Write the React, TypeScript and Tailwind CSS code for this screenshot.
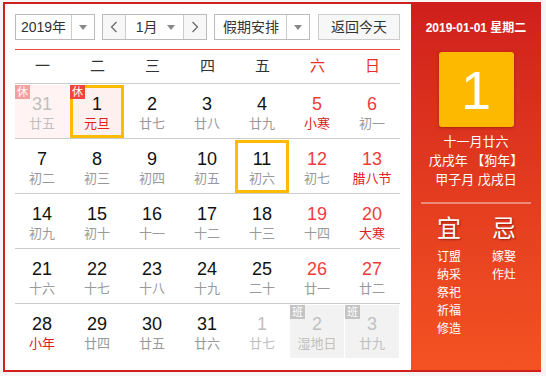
import type { ReactNode } from 'react';

type Day = {
  d: number;
  lunar: string;
  other?: boolean;
  weekend?: boolean;
  fest?: boolean;
  badge?: '休' | '班';
  selected?: boolean;
  today?: boolean;
};

const WEEK = ['一', '二', '三', '四', '五', '六', '日'];

const ROWS: Day[][] = [
  [
    { d: 31, lunar: '廿五', other: true, badge: '休' },
    { d: 1, lunar: '元旦', fest: true, badge: '休', selected: true },
    { d: 2, lunar: '廿七' },
    { d: 3, lunar: '廿八' },
    { d: 4, lunar: '廿九' },
    { d: 5, lunar: '小寒', weekend: true, fest: true },
    { d: 6, lunar: '初一', weekend: true },
  ],
  [
    { d: 7, lunar: '初二' },
    { d: 8, lunar: '初三' },
    { d: 9, lunar: '初四' },
    { d: 10, lunar: '初五' },
    { d: 11, lunar: '初六', today: true },
    { d: 12, lunar: '初七', weekend: true },
    { d: 13, lunar: '腊八节', weekend: true, fest: true },
  ],
  [
    { d: 14, lunar: '初九' },
    { d: 15, lunar: '初十' },
    { d: 16, lunar: '十一' },
    { d: 17, lunar: '十二' },
    { d: 18, lunar: '十三' },
    { d: 19, lunar: '十四', weekend: true },
    { d: 20, lunar: '大寒', weekend: true, fest: true },
  ],
  [
    { d: 21, lunar: '十六' },
    { d: 22, lunar: '十七' },
    { d: 23, lunar: '十八' },
    { d: 24, lunar: '十九' },
    { d: 25, lunar: '二十' },
    { d: 26, lunar: '廿一', weekend: true },
    { d: 27, lunar: '廿二', weekend: true },
  ],
  [
    { d: 28, lunar: '小年', fest: true },
    { d: 29, lunar: '廿四' },
    { d: 30, lunar: '廿五' },
    { d: 31, lunar: '廿六' },
    { d: 1, lunar: '廿七', other: true },
    { d: 2, lunar: '湿地日', other: true, badge: '班' },
    { d: 3, lunar: '廿九', other: true, badge: '班' },
  ],
];

const YI = ['订盟', '纳采', '祭祀', '祈福', '修造'];
const JI = ['嫁娶', '作灶'];

const FONT = { fontFamily: '"Liberation Sans", "Noto Sans CJK SC", sans-serif' };

function Caret() {
  return <span className="h-0 w-0 border-x-[4px] border-t-[5px] border-x-transparent border-t-[#888]" />;
}

function Chevron({ right }: { right?: boolean }) {
  return (
    <svg width="8" height="12" viewBox="0 0 8 12">
      <polyline
        points={right ? '1.5,1 6.5,6 1.5,11' : '6.5,1 1.5,6 6.5,11'}
        fill="none"
        stroke="#666"
        strokeWidth="1.2"
      />
    </svg>
  );
}

function Select({ width, label, textW, children }: { width: string; label: string; textW: string; children?: ReactNode }) {
  return (
    <div className={`flex h-[26px] border border-[#bbb] bg-white ${width}`}>
      <span className={`flex items-center justify-center ${textW}`}>{label}</span>
      <span className="flex flex-1 items-center justify-center border-l border-[#ccc]">
        <Caret />
      </span>
      {children}
    </div>
  );
}

function Cell({ day }: { day: Day }) {
  let bg = '';
  if (day.badge === '休') bg = day.other ? 'bg-[#fff3f3]' : 'bg-[#fff0f0]';
  if (day.badge === '班') bg = 'bg-[#f2f2f2]';

  let border = 'border-[3px] border-transparent';
  if (day.selected || day.today) border = 'border-[3px] border-[#ffbb00]';

  let numColor = 'text-[#111]';
  if (day.weekend) numColor = 'text-[#f03c3c]';
  if (day.other) numColor = 'text-[#c0c0c0]';

  let lunarColor = 'text-[#999]';
  if (day.fest) lunarColor = 'text-[#e02020]';
  if (day.other) lunarColor = 'text-[#c0c0c0]';

  return (
    <div className="flex-1 pt-[1px] pr-[1px]">
      <div className={`relative flex h-[53px] flex-col items-center ${bg} ${border}`}>
        {day.badge && (
          <span
            className={`absolute -top-[3px] -left-[3px] flex h-[14px] w-[15px] items-center justify-center text-[11px] leading-none text-white ${
              day.badge === '班' ? 'bg-[#c4c4c4]' : day.other ? 'bg-[#f5a0a0]' : 'bg-[#f0453c]'
            }`}
          >
            {day.badge}
          </span>
        )}
        <span className={`mt-[5px] text-[18px] leading-[22px] ${numColor}`}>{day.d}</span>
        <span className={`text-[13px] leading-[17px] ${lunarColor}`}>{day.lunar}</span>
      </div>
    </div>
  );
}

export default function App() {
  return (
    <div className="min-h-screen bg-[#f5f5f5] pt-[2px] pl-[3px]" style={FONT}>
      <div className="flex h-[370px] w-[538px] border-2 border-r-0 border-[#d0201c] bg-white">
        <div className="w-[406px] pt-[10px] pr-[11px] pl-[10px] text-[14px] text-[#333]">
          <div className="flex items-center">
            <Select width="w-[80px]" label="2019年" textW="w-[55px]" />
            <div className="ml-[7px] flex h-[26px] w-[106px] border border-[#bbb]">
              <span className="flex w-[22px] items-center justify-center bg-[#f7f7f7]">
                <Chevron />
              </span>
              <span className="flex flex-1 items-center border-x border-[#ccc] pr-[8px] pl-[10px]">
                <span className="flex-1">1月</span>
                <Caret />
              </span>
              <span className="flex w-[22px] items-center justify-center bg-[#f7f7f7]">
                <Chevron right />
              </span>
            </div>
            <Select width="ml-[7px] w-[96px]" label="假期安排" textW="w-[71px]" />
            <button className="ml-[8px] h-[26px] w-[82px] border border-[#ccc] bg-[#f7f7f7] text-[14px] text-[#333]">
              返回今天
            </button>
          </div>

          <div className="mt-[9px] h-px bg-[#f04a40]" />

          <div className="flex h-[34px] items-center border-b border-[#ccc] text-[15px]">
            {WEEK.map((w, i) => (
              <span key={w} className={`flex-1 text-center ${i >= 5 ? 'text-[#e83030]' : 'text-[#333]'}`}>
                {w}
              </span>
            ))}
          </div>

          {ROWS.map((row, r) => (
            <div key={r} className={`flex h-[55px] ${r < 4 ? 'border-b border-[#ccc]' : ''}`}>
              {row.map((day, i) => (
                <Cell key={i} day={day} />
              ))}
            </div>
          ))}
        </div>

        <div className="flex flex-1 flex-col items-center bg-linear-to-b from-[#d01f1c] to-[#f45223] text-white">
          <div className="mt-[15px] text-[12px] leading-[18px] font-semibold">2019-01-01 星期二</div>
          <div className="mt-[15px] flex h-[75px] w-[75px] items-center justify-center rounded-[3px] bg-[#fdb900] text-[54px] leading-none shadow-[0_1px_3px_rgba(120,20,0,0.5)]">
            1
          </div>
          <div className="mt-[5px] text-[13px] leading-[19px]">十一月廿六</div>
          <div className="text-[13px] leading-[19px]">戊戌年 【狗年】</div>
          <div className="text-[13px] leading-[19px]">甲子月 戊戌日</div>
          <div className="mt-[13px] h-[2px] w-[110px] bg-white/40" />
          <div className="mt-[11px] flex gap-[31px] self-start pl-[26px]">
            {[
              { t: '宜', list: YI },
              { t: '忌', list: JI },
            ].map((c) => (
              <div key={c.t} className="flex w-[24px] flex-col">
                <span className="text-[24px] leading-[28px] [text-shadow:1px_1px_2px_rgba(100,0,0,0.6)]">{c.t}</span>
                <div className="mt-[5px] flex flex-col text-[12px] leading-[18px]">
                  {c.list.map((s) => (
                    <span key={s}>{s}</span>
                  ))}
                </div>
              </div>
            ))}
          </div>
        </div>
      </div>
    </div>
  );
}
